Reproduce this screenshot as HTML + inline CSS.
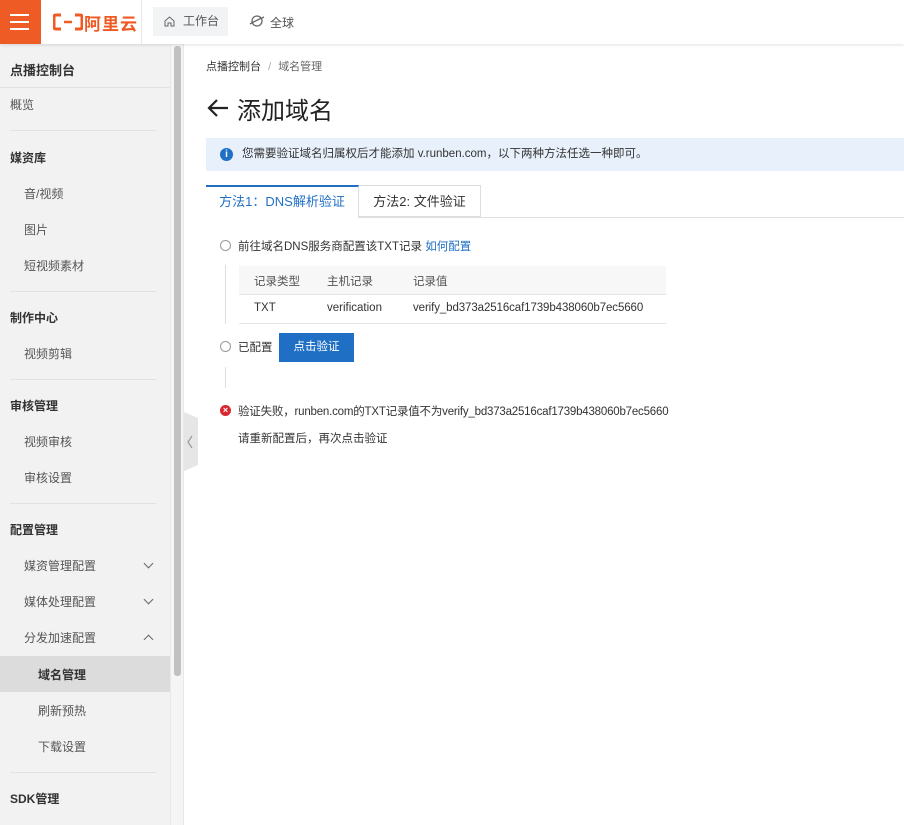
<!DOCTYPE html>
<html><head><meta charset="utf-8"><style>
*{box-sizing:border-box;margin:0;padding:0}
body{width:904px;height:825px;overflow:hidden;background:#fff;font-family:"Liberation Sans","Noto Sans CJK SC",sans-serif;color:#333;font-size:12px;position:relative}
.top{position:absolute;left:0;top:0;width:904px;height:44px;background:#fff;box-shadow:0 1px 3px rgba(0,0,0,.12);z-index:5}
.burger{position:absolute;left:0;top:0;width:41px;height:44px;background:#ef5b24}
.burger i{position:absolute;left:10px;width:19px;height:2px;background:#fff}
.logo{position:absolute;left:84px;top:10px;color:#f05a22;font-size:17px;font-weight:bold;letter-spacing:1px}
.sep{position:absolute;left:141px;top:0;width:1px;height:44px;background:#e8e8e8}
.wb{position:absolute;left:153px;top:7px;width:75px;height:29px;background:#f2f3f5;font-size:12px;color:#555;line-height:29px;padding-left:30px}
.gl{position:absolute;left:270px;top:14px;color:#555}
.side{position:absolute;left:0;top:44px;width:170px;height:781px;background:#f2f2f2}
.side div{position:absolute;left:0;width:170px}
.h{font-weight:bold;color:#333;padding-left:10px;font-size:12px}
.it{color:#555;padding-left:24px}
.sub{color:#555;padding-left:38px}
.hr{height:1px;background:#e2e2e2}
.track{position:absolute;left:170px;top:44px;width:14px;height:781px;background:#f5f5f5;border-left:1px solid #e8e8e8;border-right:1px solid #e8e8e8}
.thumb{position:absolute;left:174px;top:46px;width:7px;height:630px;background:#c1c1c1;border-radius:3px}
.chev{position:absolute;left:145px;width:7px;height:7px;border-right:1.3px solid #666;border-bottom:1.3px solid #666}
.c{font-size:11.5px}
</style></head><body>
<div class="top">
<div class="burger"><i style="top:14px"></i><i style="top:21px"></i><i style="top:28px"></i></div>
<svg style="position:absolute;left:53px;top:13px" width="30" height="18"><path d="M8 2 H3 Q1 2 1 4 V14 Q1 16 3 16 H8 M22 2 H27 Q29 2 29 4 V14 Q29 16 27 16 H22" stroke="#f05a22" stroke-width="3" fill="none"/><path d="M11 9 H19" stroke="#f05a22" stroke-width="2.5"/></svg>
<div class="logo">阿里云</div>
<div class="sep"></div>
<div class="wb"><svg style="position:absolute;left:11px;top:9px" width="11" height="11"><path d="M1 5 L5.5 1 L10 5 V10 H7 V7 H4 V10 H1Z" stroke="#666" fill="none"/></svg>工作台</div>
<div class="gl"><svg style="position:absolute;left:-21px;top:0" width="16" height="14"><circle cx="8" cy="7" r="5" stroke="#666" stroke-width="1.3" fill="none"/><path d="M1 10 Q8 6 15 3" stroke="#666" stroke-width="1.3" fill="none"/></svg>全球</div>
</div>

<div class="side">
<div class="h" style="top:16px;font-size:13px">点播控制台</div>
<div class="hr" style="top:43px"></div>
<div style="top:52px;padding-left:10px;color:#555">概览</div>
<div class="hr" style="top:86px;left:10px;width:146px"></div>
<div class="h" style="top:105px">媒资库</div>
<div class="it" style="top:141px">音/视频</div>
<div class="it" style="top:177px">图片</div>
<div class="it" style="top:213px">短视频素材</div>
<div class="hr" style="top:247px;left:10px;width:146px"></div>
<div class="h" style="top:265px">制作中心</div>
<div class="it" style="top:301px">视频剪辑</div>
<div class="hr" style="top:335px;left:10px;width:146px"></div>
<div class="h" style="top:353px">审核管理</div>
<div class="it" style="top:389px">视频审核</div>
<div class="it" style="top:425px">审核设置</div>
<div class="hr" style="top:459px;left:10px;width:146px"></div>
<div class="h" style="top:477px">配置管理</div>
<div class="it" style="top:513px">媒资管理配置</div>
<div class="it" style="top:549px">媒体处理配置</div>
<div class="it" style="top:585px">分发加速配置</div>
<div style="top:612px;height:36px;background:#dcdcdc"></div>
<div class="sub" style="top:622px;font-weight:bold;color:#333">域名管理</div>
<div class="sub" style="top:658px">刷新预热</div>
<div class="sub" style="top:694px">下载设置</div>
<div class="hr" style="top:728px;left:10px;width:146px"></div>
<div class="h" style="top:746px">SDK管理</div>
</div>
<span class="chev" style="top:560px;transform:rotate(45deg)"></span>
<span class="chev" style="top:596px;transform:rotate(45deg)"></span>
<span class="chev" style="top:636px;transform:rotate(-135deg)"></span>
<div class="track"></div><div class="thumb"></div>
<svg style="position:absolute;left:184px;top:412px" width="15" height="60"><path d="M0 0 L14 6 L14 53 L0 59Z" fill="#e6e6e6"/><path d="M8 24 L4 30 L8 36" stroke="#999" stroke-width="1.2" fill="none"/></svg>

<div style="position:absolute;left:206px;top:58px;font-size:11px;color:#333">点播控制台 <span style="color:#aaa;margin:0 4px">/</span> <span style="color:#666">域名管理</span></div>
<svg style="position:absolute;left:206px;top:98px" width="24" height="20"><path d="M22 10 H3 M11 2 L3 10 L11 18" stroke="#222" stroke-width="2.2" fill="none"/></svg>
<div style="position:absolute;left:237px;top:91px;font-size:24px;color:#222">添加域名</div>
<div class="c" style="position:absolute;left:206px;top:138px;width:698px;height:33px;background:#e8f1fb;line-height:33px;padding-left:36px;color:#333">您需要验证域名归属权后才能添加 v.runben.com，以下两种方法任选一种即可。
<span style="position:absolute;left:14px;top:10px;width:13px;height:13px;border-radius:50%;background:#1f6fc5;color:#fff;font-size:10px;line-height:13px;text-align:center;font-weight:bold">i</span></div>
<div style="position:absolute;left:206px;top:217px;width:698px;height:1px;background:#e0e0e0"></div>
<div style="position:absolute;left:206px;top:185px;width:153px;height:33px;background:#fff;border-top:2px solid #1f6fc5;border-right:1px solid #ddd;color:#1f6fc5;font-size:13px;line-height:30px;text-align:center">方法1：DNS解析验证</div>
<div style="position:absolute;left:359px;top:185px;width:122px;height:32px;border:1px solid #ddd;border-left:none;color:#333;font-size:13px;line-height:32px;text-align:center">方法2: 文件验证</div>

<span style="position:absolute;left:220px;top:240px;width:11px;height:11px;border:1px solid #999;border-radius:50%"></span>
<div class="c" style="position:absolute;left:238px;top:238px">前往域名DNS服务商配置该TXT记录 <span style="color:#1f6fc5">如何配置</span></div>
<div style="position:absolute;left:225px;top:265px;width:1px;height:59px;background:#ddd"></div>
<div style="position:absolute;left:239px;top:266px;width:427px;height:29px;background:#f7f7f7;border-bottom:1px solid #e5e5e5"></div>
<div style="position:absolute;left:239px;top:323px;width:427px;height:1px;background:#e5e5e5"></div>
<div class="c" style="position:absolute;left:254px;top:273px;color:#555">记录类型</div>
<div class="c" style="position:absolute;left:327px;top:273px;color:#555">主机记录</div>
<div class="c" style="position:absolute;left:413px;top:273px;color:#555">记录值</div>
<div class="c" style="position:absolute;left:254px;top:302px">TXT</div>
<div class="c" style="position:absolute;left:327px;top:302px">verification</div>
<div class="c" style="position:absolute;left:413px;top:302px;letter-spacing:-0.1px">verify_bd373a2516caf1739b438060b7ec5660</div>

<span style="position:absolute;left:220px;top:341px;width:11px;height:11px;border:1px solid #999;border-radius:50%"></span>
<div class="c" style="position:absolute;left:238px;top:339px">已配置</div>
<div class="c" style="position:absolute;left:279px;top:333px;width:75px;height:29px;background:#1f6fc5;color:#fff;text-align:center;line-height:29px">点击验证</div>
<div style="position:absolute;left:225px;top:367px;width:1px;height:21px;background:#ddd"></div>
<span style="position:absolute;left:220px;top:405px;width:11px;height:11px;border-radius:50%;background:#d9262f;color:#fff;font-size:9px;line-height:11px;text-align:center;font-weight:bold">×</span>
<div class="c" style="position:absolute;left:238px;top:403px;letter-spacing:-0.2px">验证失败，runben.com的TXT记录值不为verify_bd373a2516caf1739b438060b7ec5660</div>
<div class="c" style="position:absolute;left:238px;top:430px">请重新配置后，再次点击验证</div>
</body></html>
